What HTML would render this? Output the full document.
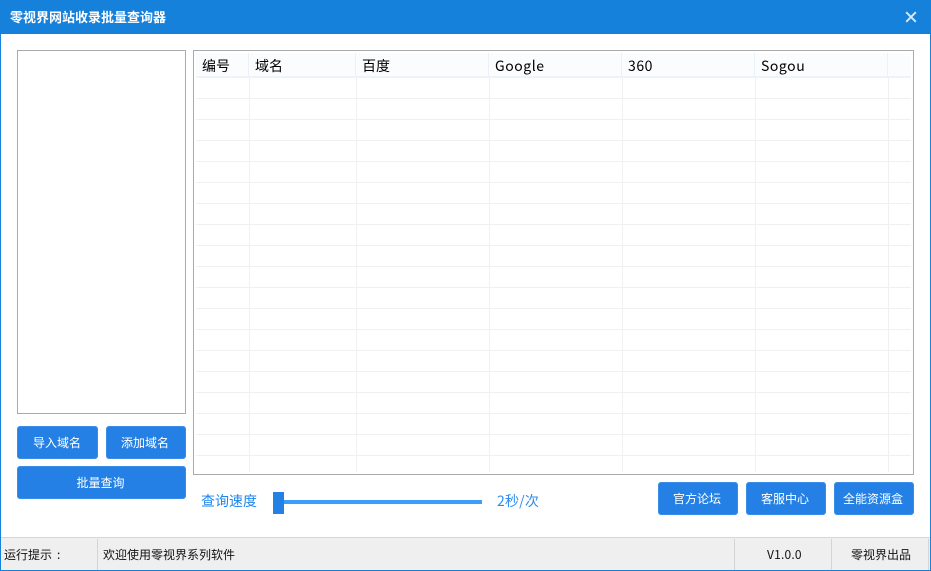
<!DOCTYPE html>
<html lang="zh">
<head>
<meta charset="utf-8">
<style>
*{box-sizing:border-box;margin:0;padding:0}
html,body{width:931px;height:571px;overflow:hidden;background:#fff}
body{position:relative;font-family:"Noto Sans CJK SC","WenQuanYi Zen Hei","Liberation Sans",sans-serif;font-size:12px;color:#111}
.a{position:absolute}
.t{position:absolute;white-space:nowrap;line-height:20px}
.btn{position:absolute;background:#2480e4;border:1px solid #3a8de7;border-radius:3px;color:#fff;font-size:12px;text-align:center;white-space:nowrap;padding-right:2px}
.h{position:absolute;top:56px;font-size:14px;line-height:20px;color:#000;white-space:nowrap}
.l{letter-spacing:.55px}
.r{position:absolute;left:196px;width:715px;height:1px;background:#f0f0f1}
.vb{position:absolute;top:78px;height:394px;width:1px;background:#f0f0f3}
.vh{position:absolute;top:53px;height:24px;width:1px;background:#e9f1fb}
.vs{position:absolute;top:539px;height:31px;width:1px;background:#d4d4d4}
</style>
</head>
<body>
<div class="a" style="left:0;top:0;width:931px;height:571px;border:1px solid #1681db;border-top:0"></div>
<div class="a" style="left:0;top:0;width:931px;height:34px;background:#1681db"></div>
<div class="t" style="left:10px;top:7px;color:#fff;font-size:13px;font-weight:700">零视界网站收录批量查询器</div>
<svg class="a" style="left:905px;top:11px" width="12" height="12" viewBox="0 0 12 12"><path d="M1.2 1.2L10.8 10.8M10.8 1.2L1.2 10.8" stroke="#d8e9f9" stroke-width="1.9" fill="none"/></svg>

<div class="a" style="left:17px;top:50px;width:169px;height:364px;border:1px solid #aaa"></div>
<div class="a" style="left:193px;top:50px;width:721px;height:425px;border:1px solid #aaa"></div>

<div class="a" style="left:196px;top:53px;width:715px;height:23px;background:#fbfcfe"></div>
<div class="a" style="left:196px;top:76px;width:715px;height:2px;background:#edf3fb"></div>
<div class="vh" style="left:248px"></div>
<div class="vh" style="left:355px"></div>
<div class="vh" style="left:488px"></div>
<div class="vh" style="left:621px"></div>
<div class="vh" style="left:754px"></div>
<div class="vh" style="left:887px"></div>
<div class="h" style="left:202px">编号</div>
<div class="h" style="left:255px">域名</div>
<div class="h" style="left:362px">百度</div>
<div class="h l" style="left:495px">Google</div>
<div class="h l" style="left:628px">360</div>
<div class="h l" style="left:761px">Sogou</div>

<div class="vb" style="left:249px"></div>
<div class="vb" style="left:356px"></div>
<div class="vb" style="left:489px"></div>
<div class="vb" style="left:622px"></div>
<div class="vb" style="left:755px"></div>
<div class="vb" style="left:888px"></div>
<div class="r" style="top:98px"></div>
<div class="r" style="top:119px"></div>
<div class="r" style="top:140px"></div>
<div class="r" style="top:161px"></div>
<div class="r" style="top:182px"></div>
<div class="r" style="top:203px"></div>
<div class="r" style="top:224px"></div>
<div class="r" style="top:245px"></div>
<div class="r" style="top:266px"></div>
<div class="r" style="top:287px"></div>
<div class="r" style="top:308px"></div>
<div class="r" style="top:329px"></div>
<div class="r" style="top:350px"></div>
<div class="r" style="top:371px"></div>
<div class="r" style="top:392px"></div>
<div class="r" style="top:413px"></div>
<div class="r" style="top:434px"></div>
<div class="r" style="top:455px"></div>

<div class="btn" style="left:17px;top:426px;width:81px;height:33px;line-height:31px;padding-right:1px">导入域名</div>
<div class="btn" style="left:106px;top:426px;width:80px;height:33px;line-height:31px">添加域名</div>
<div class="btn" style="left:17px;top:466px;width:169px;height:33px;line-height:31px">批量查询</div>
<div class="btn" style="left:658px;top:482px;width:80px;height:33px;line-height:31px">官方论坛</div>
<div class="btn" style="left:746px;top:482px;width:80px;height:33px;line-height:31px">客服中心</div>
<div class="btn" style="left:834px;top:482px;width:80px;height:33px;line-height:31px">全能资源盒</div>

<div class="t" style="left:201px;top:491px;color:#1c86ee;font-size:14px">查询速度</div>
<div class="a" style="left:284px;top:500px;width:198px;height:4px;background:#3b9dfc"></div>
<div class="a" style="left:273px;top:492px;width:11px;height:22px;background:#2480e4"></div>
<div class="t" style="left:497px;top:491px;color:#2d8cf0;font-size:14px;letter-spacing:.2px">2秒/次</div>

<div class="a" style="left:1px;top:537px;width:929px;height:33px;background:#efefef;border-top:1px solid #d6d6d6"></div>
<div class="vs" style="left:97px"></div>
<div class="vs" style="left:734px"></div>
<div class="vs" style="left:831px"></div>
<div class="vs" style="left:928px"></div>
<div class="t" style="left:4px;top:545px">运行提示</div>
<div class="t" style="left:57px;top:545px">:</div>
<div class="t" style="left:103px;top:545px">欢迎使用零视界系列软件</div>
<div class="t" style="left:767px;top:545px;letter-spacing:.2px">V1.0.0</div>
<div class="t" style="left:851px;top:545px">零视界出品</div>
</body>
</html>
